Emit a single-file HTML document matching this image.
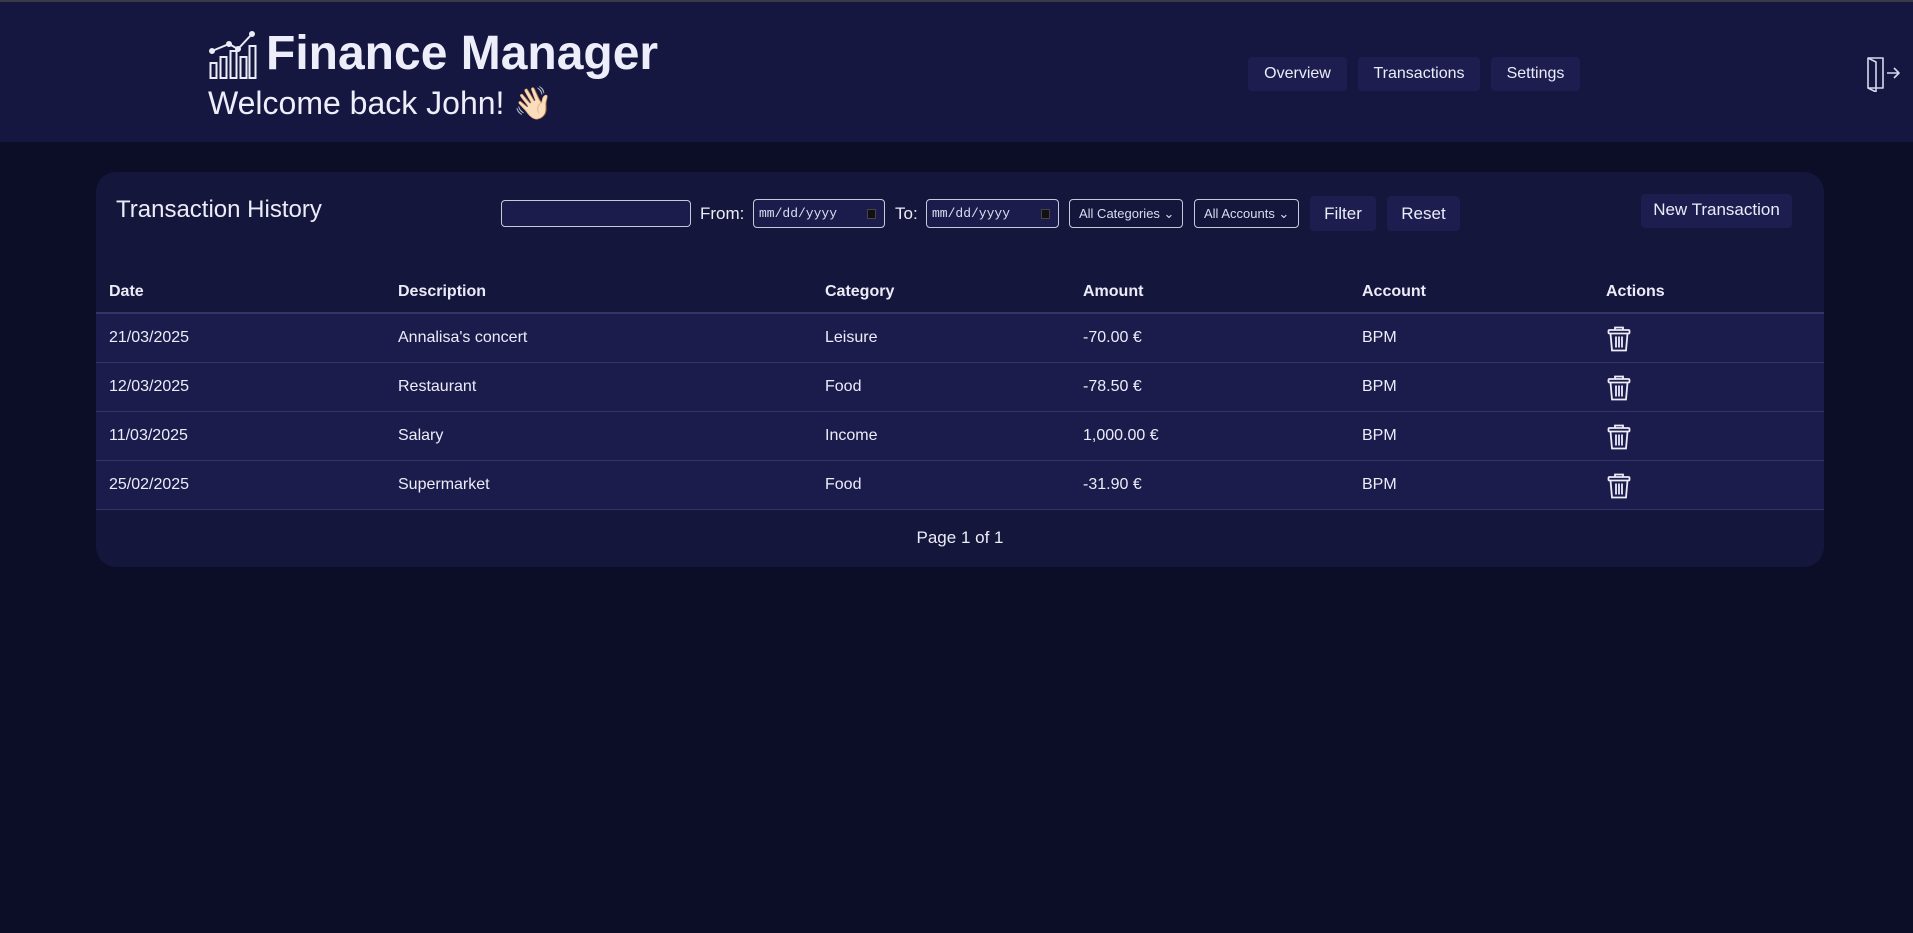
<!DOCTYPE html>
<html><head><meta charset="utf-8"><style>
*{box-sizing:border-box;margin:0;padding:0}
body{width:1913px;height:933px;background:#0c0d27;font-family:"Liberation Sans",sans-serif;color:#ececf8;position:relative;overflow:hidden}
.hdr{position:absolute;left:0;top:0;width:1913px;height:142px;background:#161740;border-top:2px solid #3a3a44}
.abs{position:absolute}
.nav{position:absolute;top:55px;height:34px;background:#1d1d4f;border-radius:4px;font-size:16px;line-height:34px;text-align:center;color:#ececf8}
.card{position:absolute;left:96px;top:172px;width:1728px;height:395px;background:#15163c;border-radius:20px;overflow:hidden}
.inp{position:absolute;border:1px solid #c8c8d8;border-radius:4px;background:#1c1c4c;color:#dcdcf0;font-size:14px}
.btn{position:absolute;background:#1d1d4f;border-radius:4px;font-size:17px;text-align:center;color:#ececf8}
.row{position:absolute;left:0;width:1728px;height:49px;background:#1c1c4c;border-bottom:1px solid #34346a;font-size:16px;line-height:48px}
.row span,.th span{position:absolute}
.th{position:absolute;left:0;top:100px;width:1728px;height:42px;font-size:16px;font-weight:bold;line-height:40px;border-bottom:2px solid #34346a}
</style></head><body>
<div class="hdr">
<svg class="abs" style="left:209px;top:29px" width="48" height="50" viewBox="0 0 48 50" fill="none" stroke="#ececf8" stroke-width="2">
<rect x="1.5" y="32" width="6" height="15"/><rect x="11.5" y="26" width="6" height="21"/><rect x="21.5" y="20" width="6" height="27"/><rect x="31.5" y="26" width="6" height="21"/><rect x="40.5" y="15" width="6" height="32"/>
<polyline points="3,20 20,13 29,18 43,3"/><circle cx="3" cy="20" r="2" fill="#ececf8"/><circle cx="20" cy="13" r="2" fill="#ececf8"/><circle cx="29" cy="18" r="2" fill="#ececf8"/><circle cx="43" cy="3" r="2" fill="#ececf8"/>
</svg>
<div class="abs" style="left:266px;top:24px;font-size:48px;font-weight:bold;color:#eeeefa">Finance Manager</div>
<div class="abs" style="left:208px;top:82px;font-size:32px;color:#eeeefa">Welcome back John! <span style="font-family:'Noto Color Emoji',sans-serif">👋🏻</span></div>
<div class="nav" style="left:1248px;width:99px">Overview</div>
<div class="nav" style="left:1358px;width:122px">Transactions</div>
<div class="nav" style="left:1491px;width:89px">Settings</div>
<svg class="abs" style="left:1866px;top:54px" width="36" height="36" viewBox="0 0 36 36" fill="none" stroke="#d8d8ec" stroke-width="1.6" stroke-linejoin="round">
<path d="M2 2h15v30H2z"/><path d="M2 2l8 4v30l-8-4"/><path d="M21 17h12M28 12l5 5-5 5"/>
</svg>
</div>
<div class="card">
<div class="abs" style="left:20px;top:24px;font-size:24px">Transaction History</div>
<div class="inp" style="left:405px;top:28px;width:190px;height:27px"></div>
<div class="abs" style="left:604px;top:32px;font-size:17px">From:</div>
<div class="inp" style="left:657px;top:27px;width:132px;height:29px;font-family:'Liberation Mono',monospace;font-size:13px;line-height:27px;padding-left:5px">mm/dd/yyyy <span style="position:absolute;right:8px;top:9px;width:9px;height:10px;background:#111;border:1px solid #444"></span></div>
<div class="abs" style="left:799px;top:32px;font-size:17px">To:</div>
<div class="inp" style="left:830px;top:27px;width:133px;height:29px;font-family:'Liberation Mono',monospace;font-size:13px;line-height:27px;padding-left:5px">mm/dd/yyyy <span style="position:absolute;right:8px;top:9px;width:9px;height:10px;background:#111;border:1px solid #444"></span></div>
<div class="inp" style="left:973px;top:27px;width:114px;height:29px;font-size:13px;line-height:27px;padding-left:9px;background:#15163c">All Categories ⌄</div>
<div class="inp" style="left:1098px;top:27px;width:105px;height:29px;font-size:13px;line-height:27px;padding-left:9px;background:#15163c">All Accounts ⌄</div>
<div class="btn" style="left:1214px;top:24px;width:66px;height:35px;line-height:35px">Filter</div>
<div class="btn" style="left:1291px;top:24px;width:73px;height:35px;line-height:35px">Reset</div>
<div class="btn" style="left:1545px;top:22px;width:151px;height:34px;line-height:32px">New Transaction</div>
<div class="th"><span style="left:13px">Date</span><span style="left:302px">Description</span><span style="left:729px">Category</span><span style="left:987px">Amount</span><span style="left:1266px">Account</span><span style="left:1510px">Actions</span></div>
<div class="row" style="top:142px"><span style="left:13px">21/03/2025</span><span style="left:302px">Annalisa's concert</span><span style="left:729px">Leisure</span><span style="left:987px">-70.00 €</span><span style="left:1266px">BPM</span></div>
<div class="row" style="top:191px"><span style="left:13px">12/03/2025</span><span style="left:302px">Restaurant</span><span style="left:729px">Food</span><span style="left:987px">-78.50 €</span><span style="left:1266px">BPM</span></div>
<div class="row" style="top:240px"><span style="left:13px">11/03/2025</span><span style="left:302px">Salary</span><span style="left:729px">Income</span><span style="left:987px">1,000.00 €</span><span style="left:1266px">BPM</span></div>
<div class="row" style="top:289px"><span style="left:13px">25/02/2025</span><span style="left:302px">Supermarket</span><span style="left:729px">Food</span><span style="left:987px">-31.90 €</span><span style="left:1266px">BPM</span></div>
<div class="abs" style="left:0;width:1728px;top:356px;text-align:center;font-size:17px">Page 1 of 1</div>
</div>
<svg width="0" height="0" style="position:absolute"><symbol id="tr" viewBox="0 0 24 26"><g fill="none" stroke="#ececf8" stroke-width="1.8"><path d="M8 4V1.5h8V4"/><rect x="1.5" y="4" width="21" height="3.5" rx="1"/><path d="M3.5 7.5l1.5 17h14l1.5-17"/><path d="M9 10.5v11M12 10.5v11M15 10.5v11"/></g></symbol></svg>
<svg class="abs" style="left:1607px;top:326px" width="24" height="26"><use href="#tr"/></svg>
<svg class="abs" style="left:1607px;top:375px" width="24" height="26"><use href="#tr"/></svg>
<svg class="abs" style="left:1607px;top:424px" width="24" height="26"><use href="#tr"/></svg>
<svg class="abs" style="left:1607px;top:473px" width="24" height="26"><use href="#tr"/></svg>
</body></html>
